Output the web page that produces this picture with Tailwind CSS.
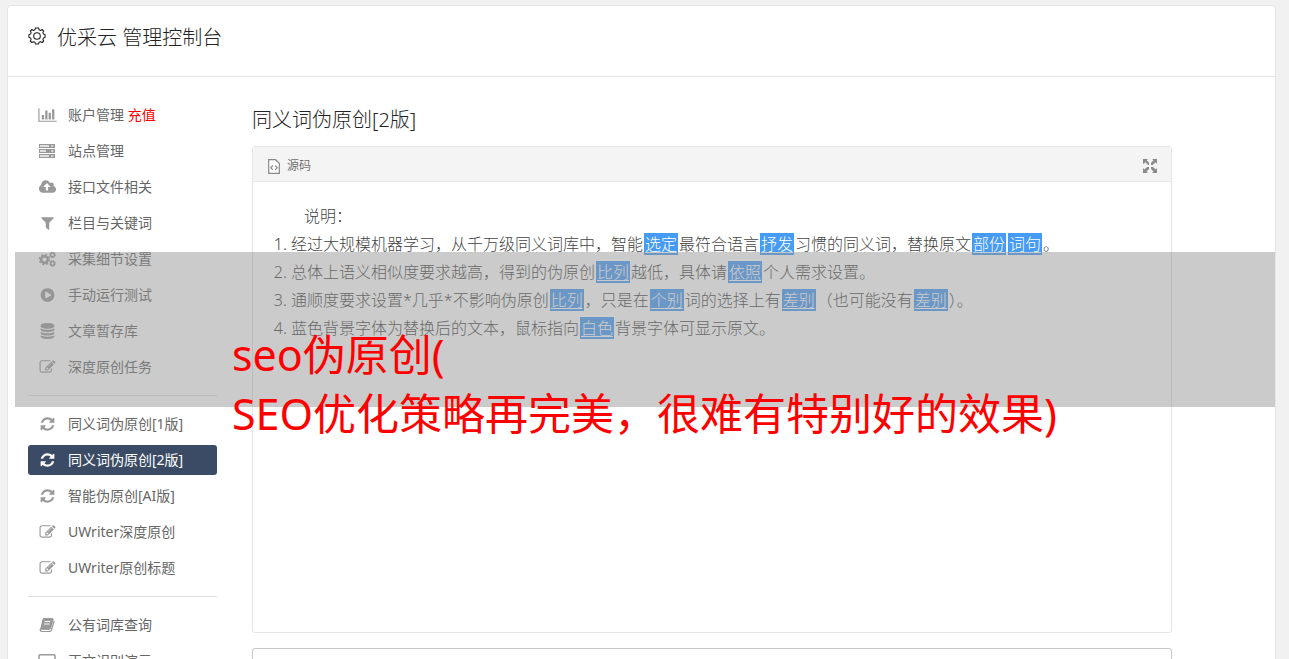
<!DOCTYPE html>
<html lang="zh-CN">
<head>
<meta charset="utf-8">
<title>优采云 管理控制台</title>
<script src="https://cdn.jsdelivr.net/npm/@tailwindcss/browser@4"></script>
</head>
<body class="relative h-screen overflow-hidden bg-[#f1f1f1] pt-[5px] pr-[13px] pl-[7px] font-['Noto_Sans','Noto_Sans_CJK_SC',sans-serif] font-light text-[#444]">
<svg class="hidden" aria-hidden="true">
  <symbol id="refresh" viewBox="0 0 1792 1792"><path d="M1639 1056q0 5-1 7-64 268-268 434.500t-478 166.500q-146 0-282.500-55t-243.500-157l-129 129q-19 19-45 19t-45-19-19-45v-448q0-26 19-45t45-19h448q26 0 45 19t19 45-19 45l-137 137q71 66 161 102t187 36q134 0 250-65t186-179q11-17 53-117 8-23 30-23h192q13 0 22.500 9.500t9.500 22.500zm25-800v448q0 26-19 45t-45 19h-448q-26 0-45-19t-19-45 19-45l138-138q-148-137-349-137-134 0-250 65t-186 179q-11 17-53 117-8 23-30 23h-199q-13 0-22.500-9.500t-9.500-22.500v-7q65-268 270-434.500t480-166.500q146 0 284 55.500t245 156.500l130-129q19-19 45-19t45 19 19 45z"/></symbol>
  <symbol id="edit" viewBox="0 0 1792 1792"><path d="M888 1184l116-116-152-152-116 116v56h96v96h56zm440-720q-16-16-33 1l-350 350q-17 17-1 33t33-1l350-350q17-17 1-33zm80 594v190q0 119-84.500 203.500t-203.500 84.500h-832q-119 0-203.500-84.500t-84.500-203.500v-832q0-119 84.500-203.500t203.500-84.500h832q63 0 117 25 15 7 18 23 3 17-9 29l-49 49q-14 14-32 8-23-6-45-6h-832q-66 0-113 47t-47 113v832q0 66 47 113t113 47h832q66 0 113-47t47-113v-126q0-13 9-22l64-64q15-15 35-7t20 29zm-96-738l288 288-672 672h-288v-288zm444 132l-92 92-288-288 92-92q28-28 68-28t68 28l152 152q28 28 28 68t-28 68z"/></symbol>
</svg>

<div class="min-h-screen rounded-t-sm border border-[#e5e5e5] bg-white">
  <header class="flex h-[71px] items-start gap-2.5 border-b border-[#e5e5e5] pt-[18px] pl-5 text-[#222]">
    <svg class="mt-[3px] size-[18px]" viewBox="0 0 18 18" fill="none" stroke="currentColor" stroke-width="1.100"><path stroke-linejoin="round" d="M7.500 1h3l.5 1.700 1.600.7 1.600-.9 1.500 1.600-.8 1.500.6 1.500 1.600.6v2.600l-1.600.6-.6 1.500.8 1.600-1.500 1.500-1.600-.8-1.600.6-.5 1.700h-3l-.5-1.700-1.600-.6-1.600.8-1.500-1.500.8-1.600-.6-1.500L.9 10.300V7.700l1.600-.6.6-1.500-.8-1.500 1.500-1.600 1.600.9L7 2.700z"/><circle cx="9" cy="9" r="3.300"/></svg>
    <h1 class="pl-px text-xl leading-7">优采云 管理控制台</h1>
  </header>

  <div class="flex items-start pl-5">
    <nav class="mt-[23px] w-[189px] shrink-0 text-sm font-normal text-[#666]">
      <ul class="flex flex-col gap-1.5">
        <li><a href="#" class="flex h-[30px] items-center gap-[11px] pl-2.5"><svg class="h-4 w-[19px] text-[#999]" fill="currentColor" viewBox="0 0 2048 1792"><path d="M640 896v512h-256v-512h256zm384-512v1024h-256v-1024h256zm1024 1152v128h-2048v-1536h128v1408h1920zm-640-896v768h-256v-768h256zm384-384v1152h-256v-1152h256z"/></svg><span>账户管理 <span class="text-[#f00]">充值</span></span></a></li>
        <li><a href="#" class="flex h-[30px] items-center gap-[11px] pl-2.5"><svg class="h-4 w-[19px] text-[#999]" viewBox="0 0 19 16" fill="currentColor"><path fill-rule="evenodd" d="M1 1h16v4H1zm1 1v2h9V2zm11 .3v1.400h2.500V2.300zM1 6h16v4H1zm1 1v2h6V7zm11 .3v1.400h2.500V7.300zM1 11h16v4H1zm1 1v2h9v-2zm11 .3v1.400h2.500v-1.400z"/><path fill-opacity=".3" d="M1 1h16v4H1zM1 6h16v4H1zM1 11h16v4H1z"/></svg>站点管理</a></li>
        <li><a href="#" class="flex h-[30px] items-center gap-[11px] pl-2.5"><svg class="h-4 w-[19px] text-[#999]" fill="currentColor" viewBox="0 0 1920 1792"><path d="M1280 864q0-14-9-23l-352-352q-9-9-23-9t-23 9l-351 351q-10 12-10 24 0 14 9 23t23 9h224v352q0 13 9.500 22.500t22.500 9.500h192q13 0 22.500-9.500t9.500-22.500v-352h224q13 0 22.500-9.500t9.500-22.500zm640 288q0 159-112.500 271.500t-271.500 112.500h-1088q-185 0-316.500-131.500t-131.500-316.500q0-130 70-240t188-165q-2-30-2-43 0-212 150-362t362-150q156 0 285.500 87t188.500 231q71-62 166-62 106 0 181 75t75 181q0 76-41 138 130 31 213.500 135.500t83.500 238.500z"/></svg>接口文件相关</a></li>
        <li><a href="#" class="flex h-[30px] items-center gap-[11px] pl-2.5"><svg class="h-4 w-[19px] text-[#999]" fill="currentColor" viewBox="0 0 1792 1792"><path d="M1595 295q17 41-14 70l-493 493v742q0 42-39 59-13 5-25 5-27 0-45-19l-256-256q-19-19-19-45v-486l-493-493q-31-29-14-70 17-39 59-39h1280q42 0 59 39z"/></svg>栏目与关键词</a></li>
        <li><a href="#" class="flex h-[30px] items-center gap-[11px] pl-2.5"><svg class="h-4 w-[19px] text-[#999]" viewBox="0 0 19 16" fill="none" stroke="currentColor"><circle cx="6.500" cy="8.500" r="3.300" stroke-width="2.400"/><circle cx="6.500" cy="8.500" r="5" stroke-width="1.600" stroke-dasharray="2 1.930"/><circle cx="14.500" cy="4" r="1.900" stroke-width="1.500"/><circle cx="14.500" cy="4" r="2.900" stroke-width="1" stroke-dasharray="1.200 1.080"/><circle cx="14.500" cy="12.500" r="1.900" stroke-width="1.500"/><circle cx="14.500" cy="12.500" r="2.900" stroke-width="1" stroke-dasharray="1.200 1.080"/></svg>采集细节设置</a></li>
        <li><a href="#" class="flex h-[30px] items-center gap-[11px] pl-2.5"><svg class="h-4 w-[19px] text-[#999]" fill="currentColor" viewBox="0 0 1792 1792"><path d="M896 128q209 0 385.500 103t279.500 279.500 103 385.500-103 385.500-279.500 279.500-385.500 103-385.500-103-279.500-279.500-103-385.500 103-385.500 279.500-279.500 385.500-103zm384 823q32-18 32-55t-32-55l-544-320q-31-19-64-1-32 19-32 56v640q0 37 32 56 16 8 32 8 17 0 32-9z"/></svg>手动运行测试</a></li>
        <li><a href="#" class="flex h-[30px] items-center gap-[11px] pl-2.5"><svg class="h-4 w-[19px] text-[#999]" fill="currentColor" viewBox="0 0 1792 1792"><path d="M896 768q237 0 443-43t325-127v170q0 69-103 128t-280 93.500-385 34.500-385-34.500-280-93.500-103-128v-170q119 84 325 127t443 43zm0 768q237 0 443-43t325-127v170q0 69-103 128t-280 93.500-385 34.500-385-34.500-280-93.500-103-128v-170q119 84 325 127t443 43zm0-384q237 0 443-43t325-127v170q0 69-103 128t-280 93.500-385 34.500-385-34.500-280-93.500-103-128v-170q119 84 325 127t443 43zm0-1152q208 0 385 34.500t280 93.500 103 128v128q0 69-103 128t-280 93.500-385 34.500-385-34.500-280-93.500-103-128v-128q0-69 103-128t280-93.500 385-34.500z"/></svg>文章暂存库</a></li>
        <li><a href="#" class="flex h-[30px] items-center gap-[11px] pl-2.5"><svg class="h-4 w-[19px] text-[#999]" fill="currentColor"><use href="#edit"/></svg>深度原创任务</a></li>
      </ul>
      <hr class="my-[13px] border-[#ddd]">
      <ul class="flex flex-col gap-1.5">
        <li><a href="#" class="flex h-[30px] items-center gap-[11px] pl-2.5"><svg class="h-4 w-[19px] text-[#999]" fill="currentColor"><use href="#refresh"/></svg>同义词伪原创[1版]</a></li>
        <li><a href="#" aria-current="page" class="flex h-[30px] items-center gap-[11px] rounded-[3px] bg-[#3b4b66] pl-2.5 text-white"><svg class="h-4 w-[19px]" fill="currentColor"><use href="#refresh"/></svg>同义词伪原创[2版]</a></li>
        <li><a href="#" class="flex h-[30px] items-center gap-[11px] pl-2.5"><svg class="h-4 w-[19px] text-[#999]" fill="currentColor"><use href="#refresh"/></svg>智能伪原创[AI版]</a></li>
        <li><a href="#" class="flex h-[30px] items-center gap-[11px] pl-2.5"><svg class="h-4 w-[19px] text-[#999]" fill="currentColor"><use href="#edit"/></svg>UWriter深度原创</a></li>
        <li><a href="#" class="flex h-[30px] items-center gap-[11px] pl-2.5"><svg class="h-4 w-[19px] text-[#999]" fill="currentColor"><use href="#edit"/></svg>UWriter原创标题</a></li>
      </ul>
      <hr class="my-[13px] border-[#ddd]">
      <ul class="flex flex-col gap-1.5">
        <li><a href="#" class="flex h-[30px] items-center gap-[11px] pl-2.5"><svg class="h-4 w-[19px] text-[#999]" viewBox="0 0 19 16" fill="none" stroke="currentColor"><path fill="currentColor" d="M5.500 1.500h8.800c.7 0 1 .5.800 1.200l-2.600 8.600c-.2.700-.6 1-1.300 1H2.600L5 2.300z"/><path stroke="#fff" d="M6.700 4.500h5.600M6 7h5.600"/><path stroke-width="1.200" d="M2.600 11.500c-.9 1.500-.3 3 1.200 3h8c.8 0 1.200-.4 1.500-1.200L16.200 4"/></svg>公有词库查询</a></li>
        <li><a href="#" class="flex h-[30px] items-center gap-[11px] pl-2.5"><svg class="h-4 w-[19px] text-[#999]" viewBox="0 0 19 16" fill="none" stroke="currentColor" stroke-width="1.500"><rect x="1" y="1.700" width="16" height="10" rx="1.200"/><path d="M0 14h18"/></svg>正文识别演示</a></li>
      </ul>
    </nav>

    <main class="mr-[103px] ml-[35px] min-w-0 grow">
      <h2 class="mt-[29px] text-xl leading-7 text-[#222]">同义词伪原创[2版]</h2>
      <section class="mt-3 rounded-[3px] border border-[#e5e5e5]">
        <div class="flex h-[35px] items-center justify-between border-b border-[#e5e5e5] bg-[#f4f4f4] pr-3.5 pl-[15px]">
          <button type="button" class="flex items-end gap-[7px] pt-1 text-xs text-[#333]"><svg class="h-[15px] w-3" viewBox="0 0 12 15" fill="none" stroke="#888" stroke-width="1.200"><path fill="#fff" d="M.7.700h6.800l3.800 3.600v10H.7z"/><path d="M4.800 6.500 2.800 8.700l2 2.200M7.200 6.500l2 2.200-2 2.200"/></svg>源码</button>
          <button type="button" aria-label="最大化" class="mt-1"><svg class="size-3.5" viewBox="0 0 14 14" fill="#8a8a8a"><path d="M0 0h5L3.700 1.300 6 3.700V5.900H5L2.600 3.300 0 5zM14 0v5l-1.400-1.700L9.500 6H8V4l2.500-2.700L9 0zM0 14V9l1.400 1.500L4 8h2v2l-2.500 2.600L5 14zM14 14H9l1.500-1.400L8 10V8h2l2.600 2.500L14 9z"/></svg></button>
        </div>
        <div class="min-h-[450px] px-[18px] pt-5 text-base leading-7">
          <p class="pl-[33px]">说明：</p>
          <ol class="list-decimal pl-5">
            <li>经过大规模机器学习，从千万级同义词库中，智能<mark class="mx-px bg-[#469bf5] px-px leading-5 text-white underline underline-offset-2">选定</mark>最符合语言<mark class="mx-px bg-[#469bf5] px-px leading-5 text-white underline underline-offset-2">抒发</mark>习惯的同义词，替换原文<mark class="mx-px bg-[#469bf5] px-px leading-5 text-white underline underline-offset-2">部份</mark><mark class="mx-px bg-[#469bf5] px-px leading-5 text-white underline underline-offset-2">词句</mark>。</li>
            <li>总体上语义相似度要求越高，得到的伪原创<mark class="mx-px bg-[#469bf5] px-px leading-5 text-white underline underline-offset-2">比列</mark>越低，具体请<mark class="mx-px bg-[#469bf5] px-px leading-5 text-white underline underline-offset-2">依照</mark>个人需求设置。</li>
            <li>通顺度要求设置*几乎*不影响伪原创<mark class="mx-px bg-[#469bf5] px-px leading-5 text-white underline underline-offset-2">比列</mark>，只是在<mark class="mx-px bg-[#469bf5] px-px leading-5 text-white underline underline-offset-2">个别</mark>词的选择上有<mark class="mx-px bg-[#469bf5] px-px leading-5 text-white underline underline-offset-2">差别</mark>（也可能没有<mark class="mx-px bg-[#469bf5] px-px leading-5 text-white underline underline-offset-2">差别</mark>）。</li>
            <li>蓝色背景字体为替换后的文本，鼠标指向<mark class="mx-px bg-[#469bf5] px-px leading-5 text-white underline underline-offset-2">白色</mark>背景字体可显示原文。</li>
          </ol>
        </div>
      </section>
      <section class="mt-[15px] h-24 rounded-[3px] border border-[#c8c8c8]"></section>
    </main>
  </div>
</div>

<div class="absolute top-[252px] right-3.5 left-[15px] h-[155px] bg-[#939393]/48"></div>
<p class="absolute top-[325px] left-[232px] text-[43px] leading-[59px] font-normal whitespace-nowrap text-[#f00]">seo伪原创(<br>SEO优化策略再完美，很难有特别好的效果)</p>
</body>
</html>
